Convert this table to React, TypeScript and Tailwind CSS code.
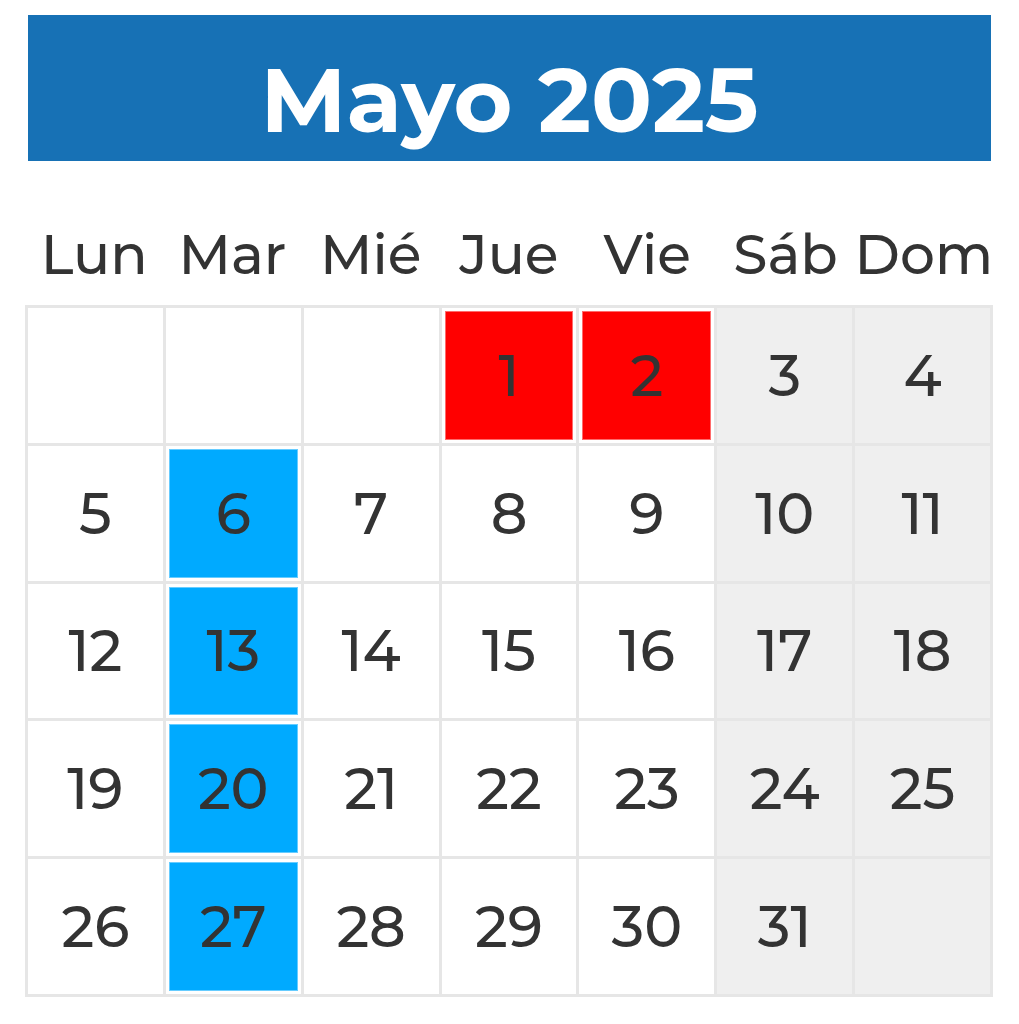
const days = ['Lun', 'Mar', 'Mié', 'Jue', 'Vie', 'Sáb', 'Dom'];

type Mark = 'red' | 'blue' | undefined;

const cells: (number | null)[] = [
  null, null, null, 1, 2, 3, 4,
  5, 6, 7, 8, 9, 10, 11,
  12, 13, 14, 15, 16, 17, 18,
  19, 20, 21, 22, 23, 24, 25,
  26, 27, 28, 29, 30, 31, null,
];

const marks: Record<number, Mark> = { 1: 'red', 2: 'red', 6: 'blue', 13: 'blue', 20: 'blue', 27: 'blue' };

function DayCell({ day, weekend }: { day: number | null; weekend: boolean }) {
  const mark = day ? marks[day] : undefined;
  const bg = weekend ? 'bg-[#efefef]' : 'bg-white';

  if (mark) {
    const inner = mark === 'red' ? 'bg-[#ff0000] border-[#ff6b6b]' : 'bg-[#00aaff] border-[#66ccff]';
    return (
      <div className={`${bg} p-[3px]`}>
        <div className={`${inner} border w-full h-full flex items-center justify-center`}>
          <span className="text-[57px] font-medium leading-none text-[#333333]">{day}</span>
        </div>
      </div>
    );
  }

  return (
    <div className={`${bg} flex items-center justify-center`}>
      {day && <span className="text-[57px] font-medium leading-none text-[#333333]">{day}</span>}
    </div>
  );
}

export default function App() {
  return (
    <div
      className="w-[1019px] h-[1024px] bg-white overflow-hidden"
      style={{ fontFamily: '"Montserrat", Inter, "Open Sans", sans-serif' }}
    >
      {/* Title */}
      <div className="ml-[28px] mt-[15px] w-[963px] h-[146px] pt-[24px] bg-[#1771b5] flex items-center justify-center">
        <h1 className="text-[90px] font-bold text-white leading-none">Mayo 2025</h1>
      </div>

      {/* Weekday names */}
      <div className="ml-[25px] w-[968px] h-[144px] grid grid-cols-7">
        {days.map((d) => (
          <div key={d} className="flex items-end justify-center pb-[23px]">
            <span className="text-[55px] font-medium leading-none text-[#333333]">{d}</span>
          </div>
        ))}
      </div>

      {/* Month grid */}
      <div className="ml-[25px] w-[968px] h-[692px] grid grid-cols-7 grid-rows-5 gap-[3px] p-[3px] bg-[#e6e6e6]">
        {cells.map((day, i) => (
          <DayCell key={i} day={day} weekend={i % 7 >= 5} />
        ))}
      </div>
    </div>
  );
}
